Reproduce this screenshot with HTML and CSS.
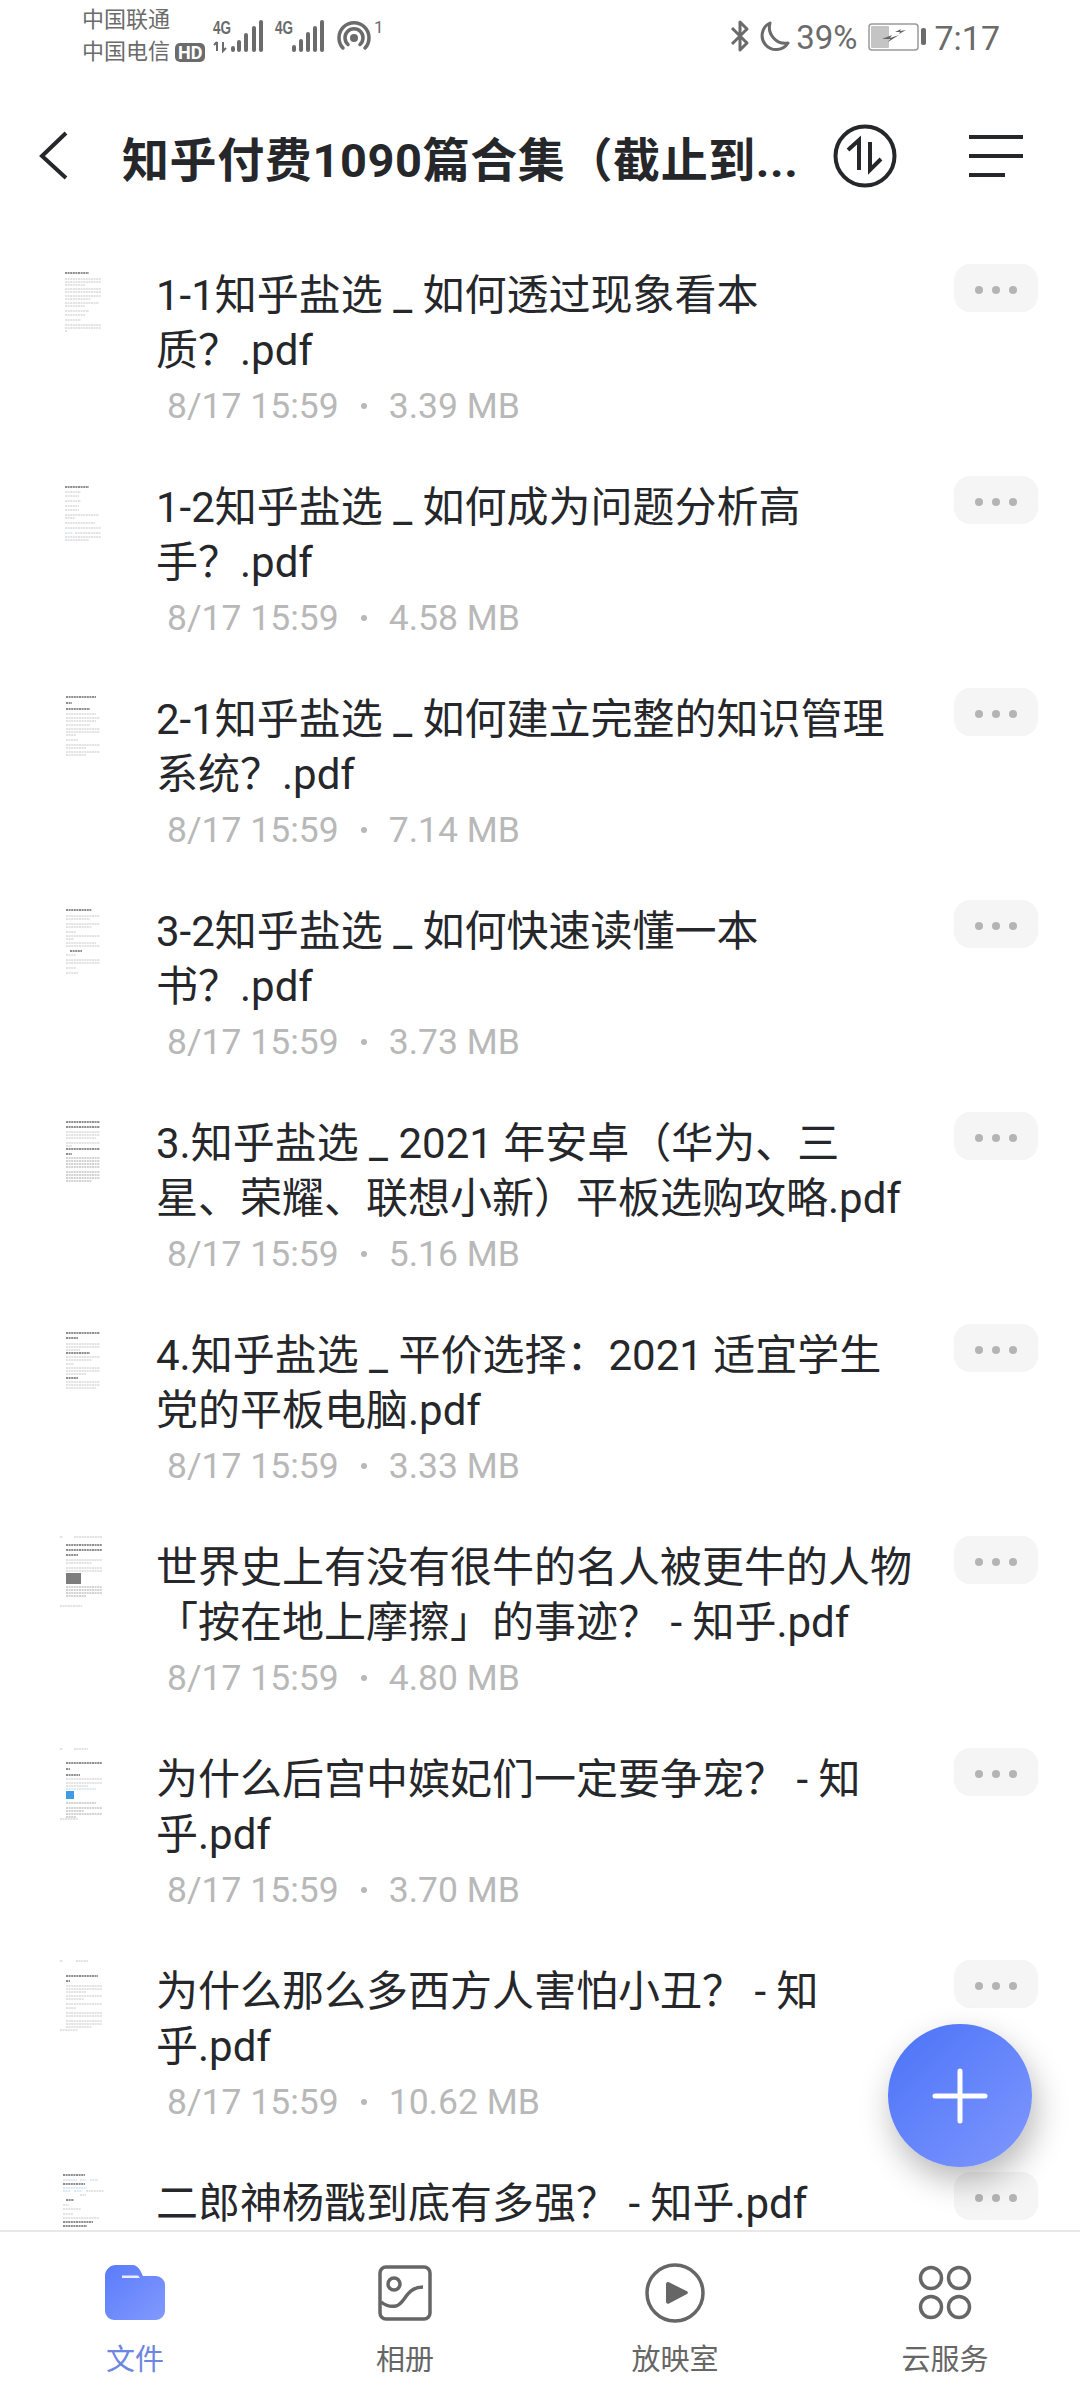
FILE: index.html
```html
<!DOCTYPE html>
<html lang="zh-CN">
<head>
  <meta charset="UTF-8">
  <title>知乎付费1090篇合集</title>
  <link rel="stylesheet" href="styles.css">
</head>
<body>
<div class="screen">

  <div class="status">
    <div class="carriers">
      <div>中国联通</div>
      <div>中国电信<span class="hd">HD</span></div>
    </div>
    <svg class="net" width="175" height="50" viewBox="0 0 175 50">
      <text class="g4" x="3" y="24" textLength="18" lengthAdjust="spacingAndGlyphs">4G</text>
      <path class="arrows" d="M7 32v9M4 35l3-3M13 32v9l3-3"/>
      <path class="bars" d="M23 38v2M29 32v8M36 25v15M44 18v22M51 12v28"/>
      <text class="g4" x="65" y="24" textLength="18" lengthAdjust="spacingAndGlyphs">4G</text>
      <path class="bars" d="M84 37v3M91 31v9M98 24v16M105 18v22M112 12v28"/>
      <path class="rings" d="M133 38A15 15 0 1 1 155 38M138 34.500A9 9 0 1 1 150 34.500"/>
      <circle cx="144" cy="28" r="4" fill="#6b6b6b"/>
      <text class="one" x="164" y="23">1</text>
    </svg>
    <div class="status-right">
      <svg width="20" height="34" viewBox="0 0 20 34"><path class="thin" d="M2 9l15 15-7 7V3l7 7L2 25"/></svg>
      <svg class="moon" width="32" height="32" viewBox="0 0 32 32"><path class="thin" d="M11 3a14 14 0 1 0 18 20A16 16 0 0 1 11 3z"/></svg>
      <span class="pct">39%</span>
      <svg class="battery" width="58" height="28" viewBox="0 0 58 28">
        <rect x="1" y="1" width="49" height="26" rx="3" fill="none" stroke="#9a9a9a" stroke-width="1.500"/>
        <rect x="3" y="3" width="18" height="22" rx="1" fill="#c4c4c4"/>
        <path d="M14 16l10-4-2 3 9-3-11 7 2-3zM27 9l6-3-1 2 6-1-7 4 1-2z" fill="#666"/>
        <rect x="53" y="5" width="5" height="17" rx="2" fill="#6b6b6b"/>
      </svg>
      <span class="clock">7:17</span>
    </div>
  </div>

  <div class="header">
    <svg class="back" width="82" height="50" viewBox="0 0 82 50"><path d="M28 2L4 25l24 22"/></svg>
    <div class="title">知乎付费1090篇合集（截止到...</div>
    <svg class="sort" width="66" height="66" viewBox="0 0 66 66">
      <circle cx="33" cy="33" r="29.500"/>
      <path d="M27 47V17l-11 10M38 19v28l11-11"/>
    </svg>
    <svg class="menu" width="54" height="46" viewBox="0 0 54 46"><path d="M0 4h54M0 23h54M0 42h36"/></svg>
  </div>

  <div class="list">
    <div class="row">
      <svg class="thumb" width="60" height="90" viewBox="0 0 60 90">
        <path class="t-head" d="M5 9h24"/>
        <path class="t-body" d="M5 15h36M5 18h36M5 21h20M5 25h36M5 28h36M5 32h36M5 35h26M5 39h34M5 42h20M5 47h24M5 51h20M5 56h16M5 61h36M5 64h36M5 67h2"/>
      </svg>
      <div class="info">
        <div class="name">1-1知乎盐选 _ 如何透过现象看本<br>质？.pdf</div>
        <div class="meta"><span>8/17 15:59</span><i></i><span>3.39 MB</span></div>
      </div>
      <div class="more"><i></i><i></i><i></i></div>
    </div>

    <div class="row">
      <svg class="thumb" width="60" height="90" viewBox="0 0 60 90">
        <path class="t-head" d="M5 11h24"/>
        <path class="t-body" d="M5 16h16M5 20h14M5 25h16M5 30h14M5 34h14M5 39h34M5 42h10M5 47h30M5 52h36"/>
        <path class="t-blue" d="M5 57h8"/>
        <path class="t-body" d="M15 57h26M5 61h36M5 64h24"/>
      </svg>
      <div class="info">
        <div class="name">1-2知乎盐选 _ 如何成为问题分析高<br>手？.pdf</div>
        <div class="meta"><span>8/17 15:59</span><i></i><span>4.58 MB</span></div>
      </div>
      <div class="more"><i></i><i></i><i></i></div>
    </div>

    <div class="row">
      <svg class="thumb" width="60" height="90" viewBox="0 0 60 90">
        <path class="t-head" d="M6 9h30M6 15h6"/>
        <path class="t-head" d="M6 21h24"/>
        <path class="t-body" d="M6 26h30M6 30h34M6 33h30M6 37h24M6 41h34M6 44h34M6 47h10M6 52h12M6 57h34M6 60h20M6 64h34M6 67h20"/>
      </svg>
      <div class="info">
        <div class="name">2-1知乎盐选 _ 如何建立完整的知识管理<br>系统？.pdf</div>
        <div class="meta"><span>8/17 15:59</span><i></i><span>7.14 MB</span></div>
      </div>
      <div class="more"><i></i><i></i><i></i></div>
    </div>

    <div class="row">
      <svg class="thumb" width="60" height="90" viewBox="0 0 60 90">
        <path class="t-head" d="M6 10h26"/>
        <path class="t-body" d="M6 16h34M6 19h24M6 24h34M6 27h26M6 32h10M6 36h34M6 39h8"/>
        <path class="t-body" d="M6 43h30M6 46h34"/>
        <path class="t-head" d="M10 51h12"/>
        <path class="t-body" d="M6 55h10M6 60h34M6 63h34M6 68h10M6 73h12"/>
      </svg>
      <div class="info">
        <div class="name">3-2知乎盐选 _ 如何快速读懂一本<br>书？.pdf</div>
        <div class="meta"><span>8/17 15:59</span><i></i><span>3.73 MB</span></div>
      </div>
      <div class="more"><i></i><i></i><i></i></div>
    </div>

    <div class="row">
      <svg class="thumb" width="60" height="90" viewBox="0 0 60 90">
        <path class="t-head" d="M6 10h34M6 15h34"/>
        <path class="t-body" d="M6 20h34M6 23h34M6 26h30M6 31h34M6 34h6"/>
        <path class="t-head" d="M6 37h34M6 42h6"/>
        <path class="t-dense" d="M6 46h34M6 49h34M6 52h34M6 55h34M6 60h34M6 63h34M6 66h34M6 69h26"/>
      </svg>
      <div class="info">
        <div class="name">3.知乎盐选 _ 2021 年安卓（华为、三<br>星、荣耀、联想小新）平板选购攻略.pdf</div>
        <div class="meta"><span>8/17 15:59</span><i></i><span>5.16 MB</span></div>
      </div>
      <div class="more"><i></i><i></i><i></i></div>
    </div>

    <div class="row">
      <svg class="thumb" width="60" height="90" viewBox="0 0 60 90">
        <path class="t-head" d="M6 9h34M6 14h12"/>
        <path class="t-body" d="M6 20h34M6 23h34M6 26h14"/>
        <path class="t-head" d="M6 29h24"/>
        <path class="t-body" d="M6 33h34M6 36h26M6 40h8M6 44h34M6 47h34M6 50h20"/>
        <path class="t-head" d="M6 54h12"/>
        <path class="t-body" d="M6 58h34M6 61h34M6 64h30"/>
      </svg>
      <div class="info">
        <div class="name">4.知乎盐选 _ 平价选择：2021 适宜学生<br>党的平板电脑.pdf</div>
        <div class="meta"><span>8/17 15:59</span><i></i><span>3.33 MB</span></div>
      </div>
      <div class="more"><i></i><i></i><i></i></div>
    </div>

    <div class="row">
      <svg class="thumb" width="60" height="90" viewBox="0 0 60 90">
        <path class="t-body" d="M0 1h3M14 1h28"/>
        <path class="t-head" d="M6 9h36M6 14h36M6 19h12"/>
        <path class="t-body" d="M6 24h36M6 27h26M6 32h36M6 35h36"/>
        <rect x="6" y="37" width="15" height="11" fill="#7d7d7d"/>
        <path class="t-dense" d="M6 51h36M6 54h36M6 57h36M6 60h20"/>
        <path class="t-body" d="M0 70h22"/>
      </svg>
      <div class="info">
        <div class="name">世界史上有没有很牛的名人被更牛的人物<br>「按在地上摩擦」的事迹？ - 知乎.pdf</div>
        <div class="meta"><span>8/17 15:59</span><i></i><span>4.80 MB</span></div>
      </div>
      <div class="more"><i></i><i></i><i></i></div>
    </div>

    <div class="row">
      <svg class="thumb" width="60" height="90" viewBox="0 0 60 90">
        <path class="t-body" d="M0 1h3M14 1h14"/>
        <path class="t-head" d="M6 15h36M6 21h4"/>
        <path class="t-head" d="M6 27h14"/>
        <path class="t-body" d="M6 31h36M6 35h36M6 38h22"/>
        <path class="t-blue" d="M6 41h30"/>
        <rect x="6" y="43" width="8" height="8" fill="#3f9be2"/>
        <path class="t-dense" d="M6 55h30M6 60h36M6 63h18M6 66h36M6 69h10"/>
        <path class="t-body" d="M0 71h18"/>
      </svg>
      <div class="info">
        <div class="name">为什么后宫中嫔妃们一定要争宠？ - 知<br>乎.pdf</div>
        <div class="meta"><span>8/17 15:59</span><i></i><span>3.70 MB</span></div>
      </div>
      <div class="more"><i></i><i></i><i></i></div>
    </div>

    <div class="row">
      <svg class="thumb" width="60" height="90" viewBox="0 0 60 90">
        <path class="t-body" d="M0 1h3M16 1h12"/>
        <path class="t-head" d="M6 16h32M6 21h4"/>
        <path class="t-body" d="M6 26h36M6 29h36M6 32h20M6 36h36M6 39h18M6 44h36M6 48h10M6 53h36M6 56h36M6 61h36M6 64h36M6 67h26"/>
        <path class="t-body" d="M0 70h18"/>
      </svg>
      <div class="info">
        <div class="name">为什么那么多西方人害怕小丑？ - 知<br>乎.pdf</div>
        <div class="meta"><span>8/17 15:59</span><i></i><span>10.62 MB</span></div>
      </div>
      <div class="more"><i></i><i></i><i></i></div>
    </div>

    <div class="row">
      <svg class="thumb" width="60" height="90" viewBox="0 0 60 90">
        <path class="t-head" d="M3 3h22"/>
        <path class="t-blue" d="M3 8h14M20 8h6M30 8h8"/>
        <path class="t-head" d="M3 12h22"/>
        <path class="t-blue" d="M3 16h24M3 19h8M14 19h8"/>
        <path class="t-body" d="M26 19h18M20 23h6"/>
        <path class="t-head" d="M6 28h8"/>
        <path class="t-body" d="M3 33h6M3 37h18M3 42h10M3 46h36"/>
        <path class="t-head" d="M3 50h30M3 54h24"/>
      </svg>
      <div class="info">
        <div class="name">二郎神杨戬到底有多强？ - 知乎.pdf</div>
      </div>
      <div class="more"><i></i><i></i><i></i></div>
    </div>
  </div>

  <div class="fab">
    <svg width="56" height="56" viewBox="0 0 56 56"><path d="M28 3v50M3 28h50"/></svg>
  </div>

  <div class="nav">
    <div class="tab active">
      <svg width="64" height="64" viewBox="0 0 64 64">
        <defs>
          <linearGradient id="folder" x1="0" y1="0" x2="1" y2="1">
            <stop offset="0" stop-color="#5a7bfb"/>
            <stop offset="1" stop-color="#829afd"/>
          </linearGradient>
        </defs>
        <path fill="url(#folder)" d="M2 15a11 11 0 0 1 11-11h16c4 0 6 2 8 5l3 6h13a9 9 0 0 1 9 9v26a9 9 0 0 1-9 9H11a9 9 0 0 1-9-9z"/>
        <path d="M19 14.500h16l2 2.500H19z" fill="#fff" opacity=".85"/>
      </svg>
      <span>文件</span>
    </div>
    <div class="tab">
      <svg width="64" height="64" viewBox="0 0 64 64">
        <rect class="line" x="7" y="6" width="50" height="52" rx="6"/>
        <circle class="line" cx="21" cy="23" r="6"/>
        <path class="line" d="M8 41c5 4 10 5 15 4 9-2 10-19 27-19"/>
      </svg>
      <span>相册</span>
    </div>
    <div class="tab">
      <svg width="64" height="64" viewBox="0 0 64 64">
        <circle class="line" cx="32" cy="32" r="28"/>
        <path d="M23 23a2 2 0 0 1 3-1.700l18 9a1.500 1.500 0 0 1 0 2.700l-18 9.500a2 2 0 0 1-3-1.700z" fill="#666"/>
      </svg>
      <span>放映室</span>
    </div>
    <div class="tab">
      <svg width="64" height="64" viewBox="0 0 64 64">
        <circle class="line" cx="18" cy="17" r="10.500"/>
        <circle class="line" cx="46" cy="17" r="10.500"/>
        <circle class="line" cx="18" cy="46" r="10.500"/>
        <circle class="line" cx="46" cy="46" r="10.500"/>
      </svg>
      <span>云服务</span>
    </div>
  </div>

</div>
</body>
</html>
```

FILE: styles.css
```css
* { box-sizing: border-box; }
html, body { margin: 0; padding: 0; background: #fff; }
body { font-family: Roboto, "Noto Sans CJK SC", sans-serif; color: #26272b; }

.screen {
  position: relative;
  width: 1080px;
  height: 2400px;
  overflow: hidden;
  display: flex;
  flex-direction: column;
  background: #fff;
}

/* status bar */
.status {
  height: 72px;
  flex: none;
  display: flex;
  padding-left: 82px;
  color: #6b6b6b;
}
.carriers {
  padding-top: 4px;
  font-size: 22px;
  line-height: 32px;
  width: 128px;
  white-space: nowrap;
}
.hd {
  display: inline-block;
  margin-left: 5px;
  padding: 0 3px;
  height: 19px;
  min-width: 28px;
  text-align: center;
  line-height: 19px;
  font-size: 18px;
  font-weight: 700;
  color: #fff;
  background: #6b6b6b;
  border-radius: 5px;
}
.net { margin: 10px 0 0 0; }
.g4 { font-family: "Liberation Sans", sans-serif; font-size: 19px; font-weight: 700; fill: #6b6b6b; }
.one { font-size: 17px; fill: #6b6b6b; }
.arrows { fill: none; stroke: #6b6b6b; stroke-width: 2; }
.bars { fill: none; stroke: #6b6b6b; stroke-width: 4; stroke-linecap: round; }
.rings { fill: none; stroke: #6b6b6b; stroke-width: 3.500; stroke-linecap: round; }
.status-right {
  margin-left: auto;
  padding: 19px 80px 0 0;
  display: flex;
  align-items: flex-start;
}
.thin { fill: none; stroke: #6b6b6b; stroke-width: 3; stroke-linejoin: round; }
.moon { margin: 1px 0 0 9px; }
.pct { margin-left: 5px; font-size: 33px; line-height: 38px; }
.battery { margin: 4px 0 0 11px; }
.clock { margin-left: 8px; font-size: 34px; line-height: 38px; }

/* title bar */
.header {
  height: 168px;
  flex: none;
  display: flex;
  align-items: center;
  padding: 0 57px 0 38px;
}
.back { flex: none; margin-right: 2px; }
.back path { fill: none; stroke: #26272b; stroke-width: 4; }
.title {
  flex: 1;
  font-size: 47px;
  font-weight: 700;
  letter-spacing: 0.6px;
  white-space: nowrap;
  overflow: hidden;
}
.sort { flex: none; margin-right: 71px; }
.sort circle, .sort path { fill: none; stroke: #26272b; stroke-width: 4; }
.menu { flex: none; }
.menu path { fill: none; stroke: #26272b; stroke-width: 4; }

/* file rows */
.list {
  flex: 1;
  min-height: 0;
  overflow: hidden;
  padding-top: 24px;
}
.row {
  height: 212px;
  display: flex;
  padding: 0 42px 0 60px;
}
.thumb { flex: none; }
.t-head, .t-body, .t-blue, .t-dense { fill: none; stroke-dasharray: 2 0.6; }
.t-head { stroke: #6a6a6a; stroke-width: 1.600; }
.t-body { stroke: #c6c6c6; stroke-width: 1; }
.t-dense { stroke: #a8a8a8; stroke-width: 1.200; }
.t-blue { stroke: #b6d8f0; stroke-width: 1.200; }

.info { flex: 1; min-width: 0; margin-left: 36px; padding-top: 4px; }
.name { font-size: 42px; line-height: 55px; white-space: nowrap; }
.meta {
  display: flex;
  align-items: center;
  gap: 22px;
  padding-left: 11px;
  font-size: 35.500px;
  line-height: 56px;
  color: #b8b8b8;
}
.meta i {
  width: 6px;
  height: 6px;
  border-radius: 50%;
  background: #b8b8b8;
}
.more {
  flex: none;
  width: 84px;
  height: 48px;
  padding-top: 3px;
  display: flex;
  align-items: center;
  justify-content: center;
  gap: 9px;
  background: #f5f5f5;
  border-radius: 16px;
}
.more i {
  width: 8px;
  height: 8px;
  border-radius: 50%;
  background: #b4b4b4;
}

/* add button */
.fab {
  position: absolute;
  left: 888px;
  top: 2024px;
  width: 144px;
  height: 143px;
  border-radius: 50%;
  display: flex;
  align-items: center;
  justify-content: center;
  background: linear-gradient(135deg, #4a72f8, #8098fd);
  box-shadow: 4px 14px 32px rgba(0, 0, 0, 0.28);
}
.fab path { fill: none; stroke: #fff; stroke-width: 5; stroke-linecap: round; }

/* bottom tabs */
.nav {
  height: 170px;
  flex: none;
  display: grid;
  grid-template-columns: repeat(4, 1fr);
  padding-top: 29px;
  border-top: 2px solid #e8e8e8;
  background: #fff;
  position: relative;
}
.tab {
  display: flex;
  flex-direction: column;
  align-items: center;
  font-size: 29px;
  line-height: 40px;
  color: #666;
}
.tab span { margin-top: 15px; }
.tab.active { color: #6d86e4; }
.line { fill: none; stroke: #666; stroke-width: 3.500; }
```
